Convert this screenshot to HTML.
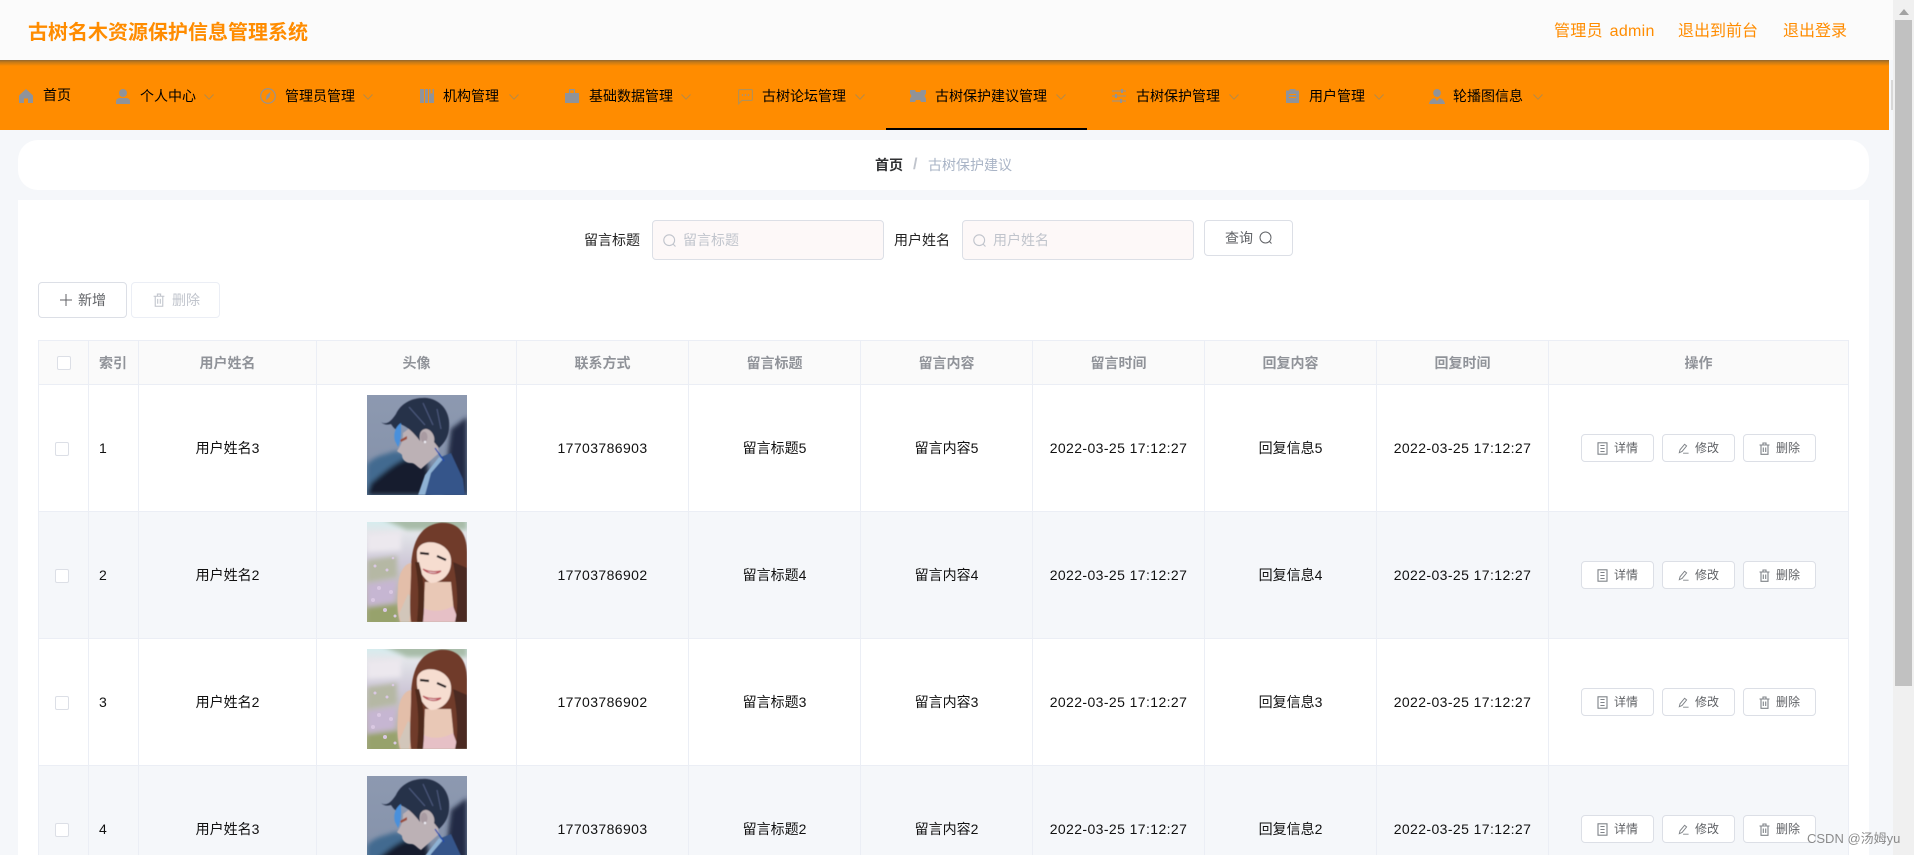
<!DOCTYPE html>
<html lang="zh-CN">
<head>
<meta charset="utf-8">
<title>古树名木资源保护信息管理系统</title>
<style>
*{box-sizing:border-box}
html,body{margin:0;padding:0;width:1914px;height:855px;overflow:hidden;background:#f5f7fa;font-family:"Liberation Sans","Noto Sans CJK SC",sans-serif;color:#111}
#p{position:absolute;left:0;top:0;width:1914px;height:855px;overflow:hidden;background:#f5f7fa}
.a{position:absolute}
#hdr{left:0;top:0;width:1893px;height:60px;background:#fbfbfb}
#nav{left:0;top:60px;width:1889px;height:70px;background:#ff8c00}
#shadow{left:0;top:60px;width:1889px;height:6px;background:linear-gradient(#8f6530,#c47a18 35%,#ff8c00)}
#title{left:28px;top:19px;font-size:20px;line-height:28px;font-weight:700;color:#ff8c00;white-space:nowrap}
.top{top:20px;font-size:16px;line-height:24px;color:#ff8c00;white-space:nowrap}
.n{font-size:14px;line-height:20px;top:86px;color:#000;white-space:nowrap}
.i{position:absolute;fill:#909399;stroke:none}
.c{position:absolute;top:94px;width:10px;height:6px;fill:none;stroke:#b48a4a;stroke-width:1}
#crumb{left:18px;top:140px;width:1851px;height:50px;background:#fff;border-radius:20px}
.b{top:155px;font-size:14px;line-height:20px;white-space:nowrap}
#card{left:18px;top:200px;width:1851px;height:655px;background:#fff}
.lb{top:230px;font-size:14px;line-height:20px;color:#222;white-space:nowrap}
.ip{top:220px;width:232px;height:40px;background:#fdf8f8;border:1px solid #dcdfe6;border-radius:4px}
.ph{top:230px;font-size:14px;line-height:20px;color:#c0c4cc;white-space:nowrap}
.btn{background:#fff;border:1px solid #dcdfe6;border-radius:4px}
table{position:absolute;left:38px;top:340px;width:1811px;border-collapse:separate;border-spacing:0;table-layout:fixed;border-left:1px solid #ebeef5;border-top:1px solid #ebeef5;font-size:14px}
th,td{padding:0;text-align:center;border-right:1px solid #ebeef5;border-bottom:1px solid #ebeef5;position:relative;overflow:hidden;white-space:nowrap}
th{height:44px;background:#fafafa;color:#909399;font-weight:700}
td{height:127px;color:#111}
tr.e td{background:#f5f7fa}
th.l{text-align:left;padding-left:10px}
td.l{text-align:left;padding-left:10px}
.ck{position:absolute;width:14px;height:14px;background:#fff;border:1px solid #dcdfe6;border-radius:2px}
th .ck{left:18px;top:15px}
td .ck{left:16px;top:57px}
.d{letter-spacing:.4px}
.av{position:absolute;left:50px;top:10px;width:100px;height:100px;display:block}
.ops{display:flex;justify-content:center;gap:8px}
.op{width:73px;height:28px;background:#fff;border:1px solid #dcdfe6;border-radius:4px;font-size:12px;line-height:26px;color:#606266;display:flex;align-items:center;justify-content:center;gap:6px}
.op svg{width:11px;height:13px;fill:none;stroke:#7f8388;stroke-width:1.1}
#track{left:1893px;top:0;width:21px;height:855px;background:#f0f0f0}
#thumb{left:1895px;top:20px;width:17px;height:666px;background:#c1c1c1}
#wm{left:1807px;top:830px;font-size:13px;line-height:18px;color:rgba(120,120,120,.85);white-space:nowrap}
</style>
</head>
<body>
<svg width="0" height="0" style="position:absolute">
<defs>
<symbol id="doc" viewBox="0 0 11 13"><rect x="1" y=".8" width="9" height="11.4"/><path d="M3.4 3.5h4.2M3.4 6.500h4.2M3.4 9.500h4.200"/></symbol>
<symbol id="edit" viewBox="0 0 13 13"><path d="M1.500 11.500 2.400 8 7.800 1.500 10.200 3.500 4.800 10 1.500 11.500ZM6 12h6.500"/></symbol>
<symbol id="del" viewBox="0 0 11 13"><path d="M.5 3h10M2 3v9.300h7V3M4 3V1h3v2M4.300 5.500v4.500M6.700 5.500v4.500"/></symbol>
<filter id="bl"><feGaussianBlur stdDeviation=".6"/></filter>
<filter id="bl2" x="-20%" y="-20%" width="140%" height="140%"><feGaussianBlur stdDeviation="2.500"/></filter>
<symbol id="boy" viewBox="0 0 100 100">
<linearGradient id="bg1" x1="0" y1="0" x2="0" y2="1"><stop offset="0" stop-color="#8d99b0"/><stop offset=".6" stop-color="#8794ac"/><stop offset="1" stop-color="#5f7c9c"/></linearGradient>
<rect width="100" height="100" fill="url(#bg1)"/>
<g filter="url(#bl2)">
<path d="M0 70C8 60 18 60 28 56L46 60 50 100H0Z" fill="#436a90"/>
<path d="M84 34 100 22V100H76Z" fill="#222c44"/>
<path d="M0 100 4 88C14 80 24 70 38 64L60 66 64 100Z" fill="#171c2e"/>
</g>
<g filter="url(#bl)">
<path d="M52 100 60 80 74 62 84 58 96 84 98 100Z" fill="#36548a"/>
<path d="M51 100 58 80 72 62 76 64 64 78 58 100Z" fill="#8fb2d4"/>
<path d="M36 38C36 46 34 50 30 56 32 58 34 58 35 60 35 64 38 68 44 68 48 68 50 72 54 74L72 58 68 38 52 26Z" fill="#bcb1b5"/>
<path d="M14 27C20 31 25 25 29 19 34 8 46 2 60 3 75 5 84 18 82 34 81 44 76 49 72 53L67 47C69 41 63 33 58 34 53 35 52 40 53 46 47 38 40 31 33 29 32 35 30 38 24 29 21 30 17 30 14 27Z" fill="#283049"/>
<path d="M28 46C26 38 29 31 34 28 34 36 35 44 31 52 30 50 29 48 28 46Z" fill="#4a90dc"/>
<path d="M42 12 58 30M56 8 66 30M70 14 74 34" stroke="#4d5c80" stroke-width="1" fill="none"/>
<ellipse cx="57" cy="42" rx="3.500" ry="5.500" fill="#a99ba2"/>
<circle cx="58" cy="47" r="1.200" fill="#f0f0f8"/>
<path d="M33 45 40 41 40 44 34 47Z" fill="#9a4e3c"/>
<path d="M68 53 77 66" stroke="#1f48b0" stroke-width="1.200" fill="none"/>
</g>
</symbol>
<symbol id="girl" viewBox="0 0 100 100">
<linearGradient id="bg2" x1="0" y1="0" x2="0" y2="1"><stop offset="0" stop-color="#d6ecee"/><stop offset=".1" stop-color="#e4e6ea"/><stop offset=".4" stop-color="#cfc9d8"/><stop offset="1" stop-color="#a8a88c"/></linearGradient>
<rect width="100" height="100" fill="url(#bg2)"/>
<g filter="url(#bl2)">
<path d="M14 -4H100V8H40Z" fill="#a8bca8"/>
<path d="M0 12 34 10 34 28 0 30Z" fill="#ece8ee"/>
<path d="M0 38 30 34 30 55 0 60Z" fill="#b5b8a4"/>
<path d="M0 62 30 58 28 80 0 84Z" fill="#c6b6d2"/>
<path d="M0 86 32 82 32 104H0Z" fill="#97a26c"/>
</g>
<g fill="#d9c8e2">
<circle cx="8" cy="44" r="1.500"/><circle cx="20" cy="48" r="1.500"/><circle cx="12" cy="66" r="2"/><circle cx="24" cy="70" r="2"/><circle cx="6" cy="78" r="2"/><circle cx="18" cy="88" r="2"/><circle cx="28" cy="94" r="1.500"/><circle cx="26" cy="36" r="1.300"/>
</g>
<g filter="url(#bl)">
<path d="M31 66C31 54 36 42 44 41L52 100H33C30 90 30 78 31 66Z" fill="#e3bea9"/>
<path d="M32 92 41 72 46 76 42 100H34Z" fill="#d2c6ba"/>
<path d="M44 100C42 84 44 62 44 50 44 22 52 4 72 1 90 -1 100 10 100 30V100Z" fill="#6f3b2a"/>
<path d="M58 60 84 60 88 100H56Z" fill="#e9c8b6"/>
<path d="M54 100 57 86C64 90 76 90 86 84L92 100Z" fill="#e6c0c6"/>
<path d="M50 30C51 21 62 18 72 22 81 26 85 33 84 42 83 55 72 61 64 61 55 57 49 43 50 30Z" fill="#f6ddd0"/>
<path d="M53 31 62 32M70 34 79 38" stroke="#1f181c" stroke-width="2.200" fill="none"/>
<path d="M56 47C61 52 69 53 74 49 69 50 61 50 56 47Z" fill="#fff" stroke="#b8505a" stroke-width="1.200"/>
<path d="M48 40C52 60 52 80 50 100H56C58 80 58 60 52 40Z" fill="#4f2a1e"/>
<path d="M86 40 100 46V100H88C92 84 90 60 86 40Z" fill="#4c2a20"/>
</g>
</symbol>
</defs>
</svg>
<div id="p">
<div class="a" id="hdr"></div>
<div class="a" id="nav"></div>
<div class="a" id="shadow"></div>
<div class="a" style="left:1889px;top:60px;width:4px;height:70px;background:#f5f7fa"></div>
<div class="a" style="left:1891px;top:80px;width:2px;height:30px;background:#d8d8d8"></div>
<div class="a" id="title">古树名木资源保护信息管理系统</div>
<div class="a top" style="left:1554px;word-spacing:2px;letter-spacing:.3px">管理员 admin</div>
<div class="a top" style="left:1678px">退出到前台</div>
<div class="a top" style="left:1783px">退出登录</div>

<svg class="i" style="left:19px;top:89px" width="14" height="14" viewBox="0 0 14 14"><path d="M7 0 14 6.500V14H9V9.500H5V14H0V6.500Z"/></svg>
<div class="a n" style="left:43px;top:85px">首页</div>

<svg class="i" style="left:116px;top:89px" width="14" height="15" viewBox="0 0 14 15"><circle cx="7" cy="4" r="4"/><path d="M0 15V12.500C0 10 2 9 4 9H10C12 9 14 10 14 12.500V15Z"/></svg>
<div class="a n" style="left:140px">个人中心</div>
<svg class="c" style="left:204px" viewBox="0 0 10 6"><path d="M.5.5 5 5.200 9.500.5"/></svg>

<svg class="i" style="left:260px;top:88px" width="16" height="16" viewBox="0 0 16 16"><circle cx="8" cy="8" r="7.300" fill="none" stroke="#909399" stroke-width="1.100"/><path d="M10.600 3.600 9.600 9 5.800 12.400 6.600 7.200Z"/></svg>
<div class="a n" style="left:285px">管理员管理</div>
<svg class="c" style="left:363px" viewBox="0 0 10 6"><path d="M.5.5 5 5.200 9.500.5"/></svg>

<svg class="i" style="left:420px;top:89px" width="14" height="14" viewBox="0 0 14 14"><rect x="0" y="0" width="4" height="14"/><rect x="5" y="0" width="3" height="14"/><path d="M9 0H14V14H9Z"/><path d="M10.500 0V5L11.500 4 12.500 5V0Z" fill="#ff8c00"/></svg>
<div class="a n" style="left:443px">机构管理</div>
<svg class="c" style="left:509px" viewBox="0 0 10 6"><path d="M.5.5 5 5.200 9.500.5"/></svg>

<svg class="i" style="left:565px;top:89px" width="14" height="14" viewBox="0 0 14 14"><path d="M4 0H10V4H14V14H0V4H4ZM5.200 1.200V4H8.800V1.200Z" fill-rule="evenodd"/></svg>
<div class="a n" style="left:589px">基础数据管理</div>
<svg class="c" style="left:681px" viewBox="0 0 10 6"><path d="M.5.5 5 5.200 9.500.5"/></svg>

<svg class="i" style="left:738px;top:89px" width="15" height="16" viewBox="0 0 15 16"><path d="M1.600 .6H13.400A1 1 0 0 1 14.400 1.600V10.400A1 1 0 0 1 13.400 11.400H4L.6 14.800V1.600A1 1 0 0 1 1.600 .6Z" fill="none" stroke="#b39157" stroke-width="1.100"/><circle cx="4.500" cy="6" r=".8"/><circle cx="7.500" cy="6" r=".8"/><circle cx="10.500" cy="6" r=".8"/></svg>
<div class="a n" style="left:762px">古树论坛管理</div>
<svg class="c" style="left:855px" viewBox="0 0 10 6"><path d="M.5.5 5 5.200 9.500.5"/></svg>

<svg class="i" style="left:910px;top:90px" width="16" height="12" viewBox="0 0 16 12"><path d="M0 0H5L6 2 10 2 11 0H16V3.500L14.500 6 16 8.500V12H11L10 10 6 10 5 12H0V8.500L1.500 6 0 3.500Z"/></svg>
<div class="a n" style="left:935px">古树保护建议管理</div>
<svg class="c" style="left:1056px" viewBox="0 0 10 6"><path d="M.5.5 5 5.200 9.500.5"/></svg>

<svg class="i" style="left:1112px;top:89px" width="14" height="14" viewBox="0 0 14 14"><path d="M0 1.500H14V2.500H0ZM0 6.500H14V7.500H0ZM0 11.500H14V12.500H0Z"/><rect x="9" y="0" width="2" height="4"/><rect x="3" y="5" width="2" height="4"/><rect x="8" y="10" width="2" height="4"/></svg>
<div class="a n" style="left:1136px">古树保护管理</div>
<svg class="c" style="left:1229px" viewBox="0 0 10 6"><path d="M.5.5 5 5.200 9.500.5"/></svg>

<svg class="i" style="left:1286px;top:89px" width="13" height="14" viewBox="0 0 13 14"><path d="M0 1.500H3.500V0H9.500V1.500H13V14H0ZM3 5V6H10V5ZM3 8V9H10V8Z" fill-rule="evenodd"/></svg>
<div class="a n" style="left:1309px">用户管理</div>
<svg class="c" style="left:1374px" viewBox="0 0 10 6"><path d="M.5.5 5 5.200 9.500.5"/></svg>

<svg class="i" style="left:1429px;top:89px" width="16" height="15" viewBox="0 0 16 15"><ellipse cx="8" cy="4" rx="3.800" ry="4"/><path d="M0 15C.5 11.500 2.500 10 5.500 9L8 12 10.500 9C13.500 10 15.500 11.500 16 15Z"/></svg>
<div class="a n" style="left:1453px">轮播图信息</div>
<svg class="c" style="left:1533px" viewBox="0 0 10 6"><path d="M.5.5 5 5.200 9.500.5"/></svg>

<div class="a" style="left:886px;top:128px;width:201px;height:2px;background:#000"></div>

<div class="a" id="crumb"></div>
<div class="a b" style="left:875px;color:#303133;font-weight:700">首页</div>
<div class="a b" style="left:913px;color:#c0c4cc;font-weight:700;font-size:16px">/</div>
<div class="a b" style="left:928px;color:#a9b4c6">古树保护建议</div>

<div class="a" id="card"></div>
<div class="a lb" style="left:584px">留言标题</div>
<div class="a ip" style="left:652px"></div>
<svg class="a" style="left:663px;top:234px" width="14" height="14" viewBox="0 0 14 14" fill="none" stroke="#c0c4cc" stroke-width="1.100"><circle cx="6.200" cy="6.200" r="5.400"/><path d="M10 10 12.500 12.500"/></svg>
<div class="a ph" style="left:683px">留言标题</div>
<div class="a lb" style="left:894px">用户姓名</div>
<div class="a ip" style="left:962px"></div>
<svg class="a" style="left:973px;top:234px" width="14" height="14" viewBox="0 0 14 14" fill="none" stroke="#c0c4cc" stroke-width="1.100"><circle cx="6.200" cy="6.200" r="5.400"/><path d="M10 10 12.500 12.500"/></svg>
<div class="a ph" style="left:993px">用户姓名</div>
<div class="a btn" style="left:1204px;top:220px;width:89px;height:36px"></div>
<div class="a" style="left:1225px;top:228px;font-size:14px;line-height:20px;color:#606266">查询</div>
<svg class="a" style="left:1259px;top:231px" width="14" height="14" viewBox="0 0 14 14" fill="none" stroke="#606266" stroke-width="1"><circle cx="6.500" cy="6.500" r="5.500"/><path d="M10.300 10.300 12.500 12.500"/></svg>

<div class="a btn" style="left:38px;top:282px;width:89px;height:36px"></div>
<svg class="a" style="left:60px;top:294px" width="12" height="12" viewBox="0 0 12 12" stroke="#606266" stroke-width="1"><path d="M6 0V12M0 6H12"/></svg>
<div class="a" style="left:78px;top:290px;font-size:14px;line-height:20px;color:#606266">新增</div>
<div class="a btn" style="left:131px;top:282px;width:89px;height:36px;border-color:#ebeef5"></div>
<svg class="a" style="left:153px;top:293px;fill:none;stroke:#c0c4cc;stroke-width:1" width="12" height="14"><use href="#del"/></svg>
<div class="a" style="left:172px;top:290px;font-size:14px;line-height:20px;color:#c0c4cc">删除</div>

<table>
<colgroup><col style="width:50px"><col style="width:50px"><col style="width:178px"><col style="width:200px"><col style="width:172px"><col style="width:172px"><col style="width:172px"><col style="width:172px"><col style="width:172px"><col style="width:172px"><col style="width:300px"></colgroup>
<thead><tr><th><span class="ck"></span></th><th class="l">索引</th><th>用户姓名</th><th>头像</th><th>联系方式</th><th>留言标题</th><th>留言内容</th><th>留言时间</th><th>回复内容</th><th>回复时间</th><th>操作</th></tr></thead>
<tbody>
<tr><td><span class="ck"></span></td><td class="l">1</td><td>用户姓名3</td><td><svg class="av"><use href="#boy"/></svg></td><td class="d">17703786903</td><td>留言标题5</td><td>留言内容5</td><td class="d">2022-03-25 17:12:27</td><td>回复信息5</td><td class="d">2022-03-25 17:12:27</td><td><div class="ops"><span class="op"><svg><use href="#doc"/></svg>详情</span><span class="op"><svg><use href="#edit"/></svg>修改</span><span class="op"><svg><use href="#del"/></svg>删除</span></div></td></tr>
<tr class="e"><td><span class="ck"></span></td><td class="l">2</td><td>用户姓名2</td><td><svg class="av"><use href="#girl"/></svg></td><td class="d">17703786902</td><td>留言标题4</td><td>留言内容4</td><td class="d">2022-03-25 17:12:27</td><td>回复信息4</td><td class="d">2022-03-25 17:12:27</td><td><div class="ops"><span class="op"><svg><use href="#doc"/></svg>详情</span><span class="op"><svg><use href="#edit"/></svg>修改</span><span class="op"><svg><use href="#del"/></svg>删除</span></div></td></tr>
<tr><td><span class="ck"></span></td><td class="l">3</td><td>用户姓名2</td><td><svg class="av"><use href="#girl"/></svg></td><td class="d">17703786902</td><td>留言标题3</td><td>留言内容3</td><td class="d">2022-03-25 17:12:27</td><td>回复信息3</td><td class="d">2022-03-25 17:12:27</td><td><div class="ops"><span class="op"><svg><use href="#doc"/></svg>详情</span><span class="op"><svg><use href="#edit"/></svg>修改</span><span class="op"><svg><use href="#del"/></svg>删除</span></div></td></tr>
<tr class="e"><td><span class="ck"></span></td><td class="l">4</td><td>用户姓名3</td><td><svg class="av"><use href="#boy"/></svg></td><td class="d">17703786903</td><td>留言标题2</td><td>留言内容2</td><td class="d">2022-03-25 17:12:27</td><td>回复信息2</td><td class="d">2022-03-25 17:12:27</td><td><div class="ops"><span class="op"><svg><use href="#doc"/></svg>详情</span><span class="op"><svg><use href="#edit"/></svg>修改</span><span class="op"><svg><use href="#del"/></svg>删除</span></div></td></tr>
</tbody>
</table>

<div class="a" id="track"></div>
<svg class="a" style="left:1899px;top:9px" width="10" height="6" viewBox="0 0 10 6"><path d="M5 0 10 6H0Z" fill="#a3a3a3"/></svg>
<div class="a" id="thumb"></div>
<div class="a" id="wm">CSDN @汤姆yu</div>
</div>
</body>
</html>
